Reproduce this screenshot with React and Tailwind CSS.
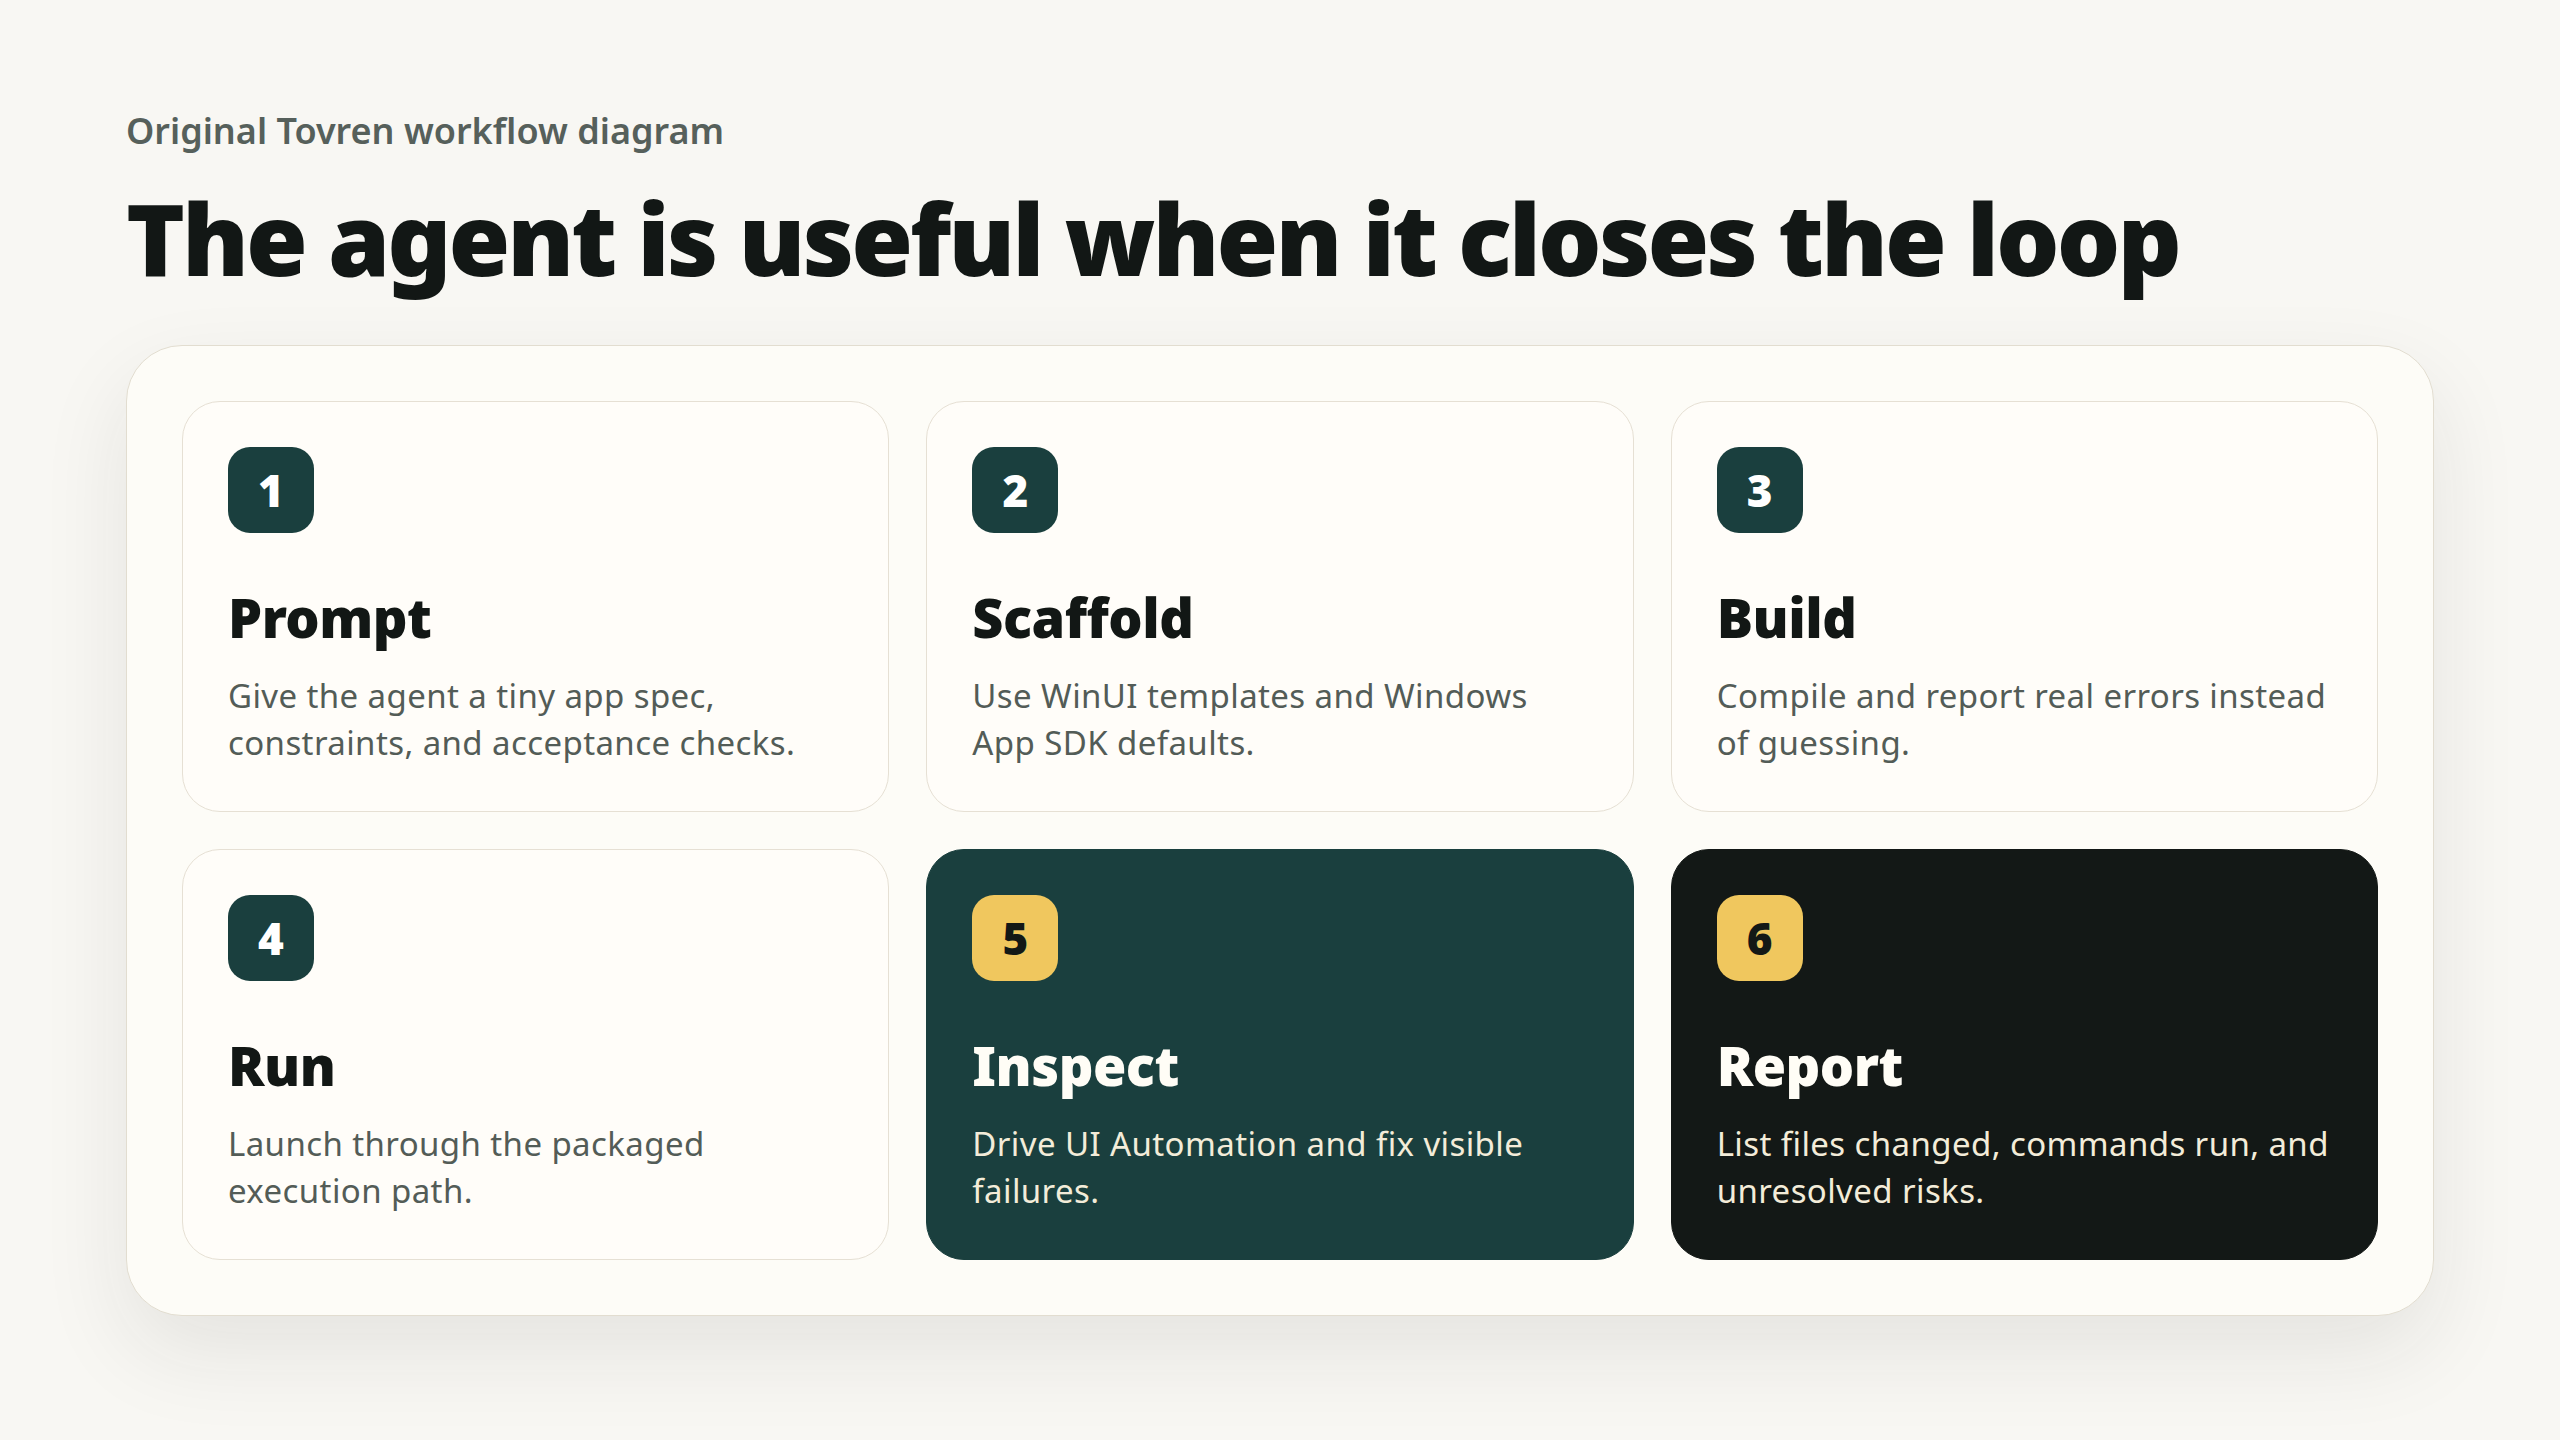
import React from "react";

const steps = [
  { n: "1", title: "Prompt", text: "Give the agent a tiny app spec, constraints, and acceptance checks.", tone: "light" },
  { n: "2", title: "Scaffold", text: "Use WinUI templates and Windows App SDK defaults.", tone: "light" },
  { n: "3", title: "Build", text: "Compile and report real errors instead of guessing.", tone: "light" },
  { n: "4", title: "Run", text: "Launch through the packaged execution path.", tone: "light" },
  { n: "5", title: "Inspect", text: "Drive UI Automation and fix visible failures.", tone: "teal" },
  { n: "6", title: "Report", text: "List files changed, commands run, and unresolved risks.", tone: "ink" },
];

function StepCard({ step }) {
  const dark = step.tone !== "light";
  const cardTone =
    step.tone === "teal"
      ? "bg-[#1a3f3e] border-[#1a3f3e]"
      : step.tone === "ink"
      ? "bg-[#131816] border-[#131816]"
      : "bg-[#fffdf9] border-[#e6e0d4]";

  return (
    <article className={`rounded-[38px] border p-[45px] ${cardTone}`}>
      <div
        className={`flex h-[86px] w-[86px] items-center justify-center rounded-[22px] text-[44px] font-black leading-none ${
          dark ? "bg-[#f0c75e] text-[#131816]" : "bg-[#1a3f3e] text-white"
        }`}
      >
        {step.n}
      </div>
      <h2
        className={`mt-[57px] text-[54px] font-black leading-none tracking-[-0.5px] ${
          dark ? "text-[#fffdf6]" : "text-[#121715]"
        }`}
      >
        {step.title}
      </h2>
      <p
        className={`mt-[28px] text-[33px] leading-[47px] tracking-[0.4px] ${
          dark ? "text-[#f3ecd9]" : "text-[#535c57]"
        }`}
      >
        {step.text}
      </p>
    </article>
  );
}

export default function App() {
  return (
    <main className="min-h-screen bg-[#f8f7f3] px-[126px] pt-[113px] pb-[124px] font-['Noto_Sans',sans-serif]">
      <p className="text-[36px] font-semibold leading-none text-[#56605b]">Original Tovren workflow diagram</p>
      <h1 className="mt-[38px] text-[100px] font-black leading-none tracking-[-3px] text-[#121715]">
        The agent is useful when it closes the loop
      </h1>
      <section className="mt-[58px] rounded-[56px] border border-[#e2ddd0] bg-[#fdfcf7] p-[55px] shadow-[0_36px_90px_rgba(30,34,30,0.09)]">
        <div className="grid grid-cols-3 gap-[37px]">
          {steps.map((step) => (
            <StepCard key={step.n} step={step} />
          ))}
        </div>
      </section>
    </main>
  );
}
